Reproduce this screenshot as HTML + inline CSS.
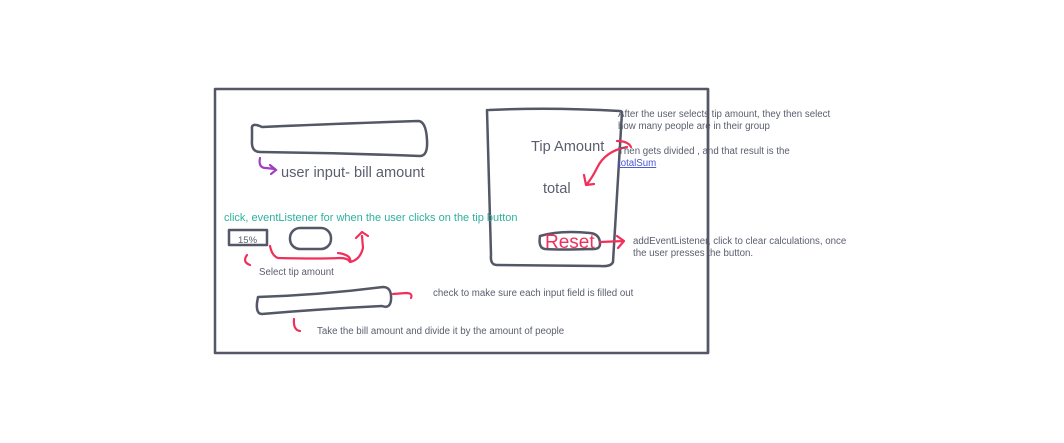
<!DOCTYPE html><html><head><style>body{margin:0;background:#fff}svg{display:block}text{font-family:"Liberation Sans",sans-serif}</style></head><body>
<svg width="1064" height="443" viewBox="0 0 1064 443">
<g fill="none" stroke="#535766" stroke-width="2.5" stroke-linecap="round" stroke-linejoin="round">
<rect x="215" y="89" width="493" height="264"/>
<path d="M252 129 Q251 122 262 127 Q330 124 418 121 Q426 121 427 140 Q428 156 420 156 Q340 153 260 152 Q251 152 252 140 Z"/>
<path d="M489 110 Q550 107 620 111 L622 112 Q618 180 613 262 Q611 267 600 266 L497 265 Q490 265 491 255 Q489 180 487 110"/>
<rect x="229" y="230" width="38" height="15"/>
<rect x="290" y="228" width="41" height="21" rx="10"/>
<path d="M258 297 Q320 295 383 287 Q392 287 391 300 Q390 309 382 306 Q320 309 262 314 Q256 314 257 303 Z"/>
<path d="M540 236 Q560 230 590 233 Q600 234 600 244 Q600 250 590 249 Q560 250 545 249 Q538 248 540 236 Z"/>
</g>
<g fill="none" stroke="#a040c0" stroke-width="2.2" stroke-linecap="round"><path d="M260 158 Q258 168 266 168 L275 169 M270 165 L276 170 L271 174"/></g>
<g fill="none" stroke="#f0305a" stroke-width="2.2" stroke-linecap="round" stroke-linejoin="round">
<path d="M270 246 Q272 256 278 258 Q320 259 340 258 Q348 258 350 262 M338 253 Q352 255 350 262 Q360 260 363 248 L362 236 M356 238 L362 232 L368 236"/>
<path d="M247 255 Q242 262 250 265"/>
<path d="M393 294 L406 293 Q413 293 411 298"/>
<path d="M294 319 Q293 330 300 331"/>
<path d="M617 141 Q628 141 631 147 M627 147 Q605 151 597 168 Q592 178 587 184 M584 175 L586 185 L594 184"/>
<path d="M600 242 L624 241 M617 236 L624 241 L618 248"/>
</g>
<text x="545" y="248" font-size="19" fill="#f0305a" font-family="Liberation Serif,serif">Reset</text>
<g fill="#5a5e6e">
<text x="281" y="177" font-size="14.6">user input- bill amount</text>
<text x="531" y="151" font-size="14.6">Tip Amount</text>
<text x="543" y="193" font-size="14.6">total</text>
<text x="238" y="243" font-size="9.5">15%</text>
<text x="259" y="275" font-size="9.7">Select tip amount</text>
<text x="433" y="296" font-size="9.7">check to make sure each input field  is filled out</text>
<text x="317" y="334" font-size="9.7">Take the bill amount and divide it by the amount of people</text>
<text x="618" y="117" font-size="9.7">After the user selects tip amount, they then select</text>
<text x="618" y="129" font-size="9.7">how many people are in their group</text>
<text x="618" y="154" font-size="9.7">Then gets  divided , and that result is the</text>
<text x="633" y="244" font-size="9.7">addEventListener, click to clear calculations, once</text>
<text x="633" y="256" font-size="9.7">the user presses  the button.</text>
</g>
<text x="618" y="166" font-size="9.7" fill="#4a55d0" text-decoration="underline">totalSum</text>
<text x="224" y="221" font-size="11" fill="#2fb0a0">click, eventListener for when the user clicks on the tip button</text>
<line x1="708" y1="89" x2="708" y2="353" stroke="#535766" stroke-width="2.5"/>
</svg></body></html>
